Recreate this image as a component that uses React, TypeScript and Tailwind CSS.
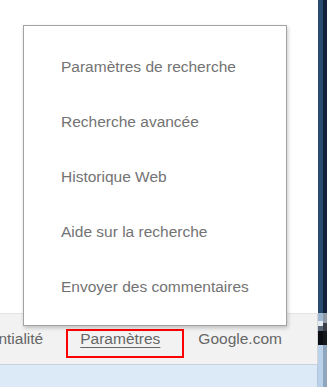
const menuItems = [
  'Paramètres de recherche',
  'Recherche avancée',
  'Historique Web',
  'Aide sur la recherche',
  'Envoyer des commentaires',
]

export default function App() {
  return (
    <div className="w-[327px] h-[387px] flex bg-white overflow-hidden relative font-['Liberation_Sans',Arial,sans-serif]">
      {/* page */}
      <div className="w-[318px] h-full flex flex-col">
        <div className="flex-1 bg-white" />
        {/* footer */}
        <footer className="h-[51px] bg-[#f2f2f2] border-t border-[#e4e4e4] border-r border-r-[#d6d6d6] flex items-center whitespace-nowrap overflow-hidden text-[15.5px] leading-[18px] text-[#666]">
          <span className="ml-[-55px] shrink-0">Confidentialité</span>
          <span className="relative ml-[37px] shrink-0 underline underline-offset-[3px]">
            Paramètres
            <span className="absolute left-[-14px] top-[-1px] w-[118px] h-[29px] border-2 border-[#ff0000]" />
          </span>
          <span className="ml-[38px] shrink-0">Google.com</span>
        </footer>
        <div className="h-[23px] bg-[#dce9f7] border-t border-[#c9d3de] border-r border-r-[#b7c7d8]" />
      </div>

      {/* window frame */}
      <div className="flex-1 flex">
        <div className="w-[5px] h-full flex flex-col">
          <div className="h-[313px] bg-[#284a6f]" />
          <div className="h-[8px] bg-[#9fb8d2]" />
          <div className="h-[5px] bg-[#e2ebf4]" />
          <div className="h-[5px] bg-[#5a6675]" />
          <div className="h-[14px] bg-[#0a0d12]" />
          <div className="flex-1 bg-[#b9d1ea]" />
        </div>
        <div className="flex-1 h-full flex flex-col">
          <div className="h-[313px] bg-[#0f223a]" />
          <div className="h-[10px] bg-[#8e9aa7]" />
          <div className="h-[8px] bg-[#3b4048]" />
          <div className="h-[14px] bg-[#15181d]" />
          <div className="flex-1 bg-[#8fa6bd]" />
        </div>
      </div>

      {/* dropdown menu */}
      <div className="absolute left-[23px] top-[25px] w-[264px] h-[301px] bg-white border border-[#a3a3a3] shadow-[1px_2px_4px_rgba(0,0,0,0.22)] pt-[13px] pb-[11px] pl-[37px]">
        {menuItems.map(item => (
          <div key={item} className="h-[55px] flex items-center text-[15.5px] leading-[18px] text-[#737373] whitespace-nowrap">
            {item}
          </div>
        ))}
      </div>
    </div>
  )
}
